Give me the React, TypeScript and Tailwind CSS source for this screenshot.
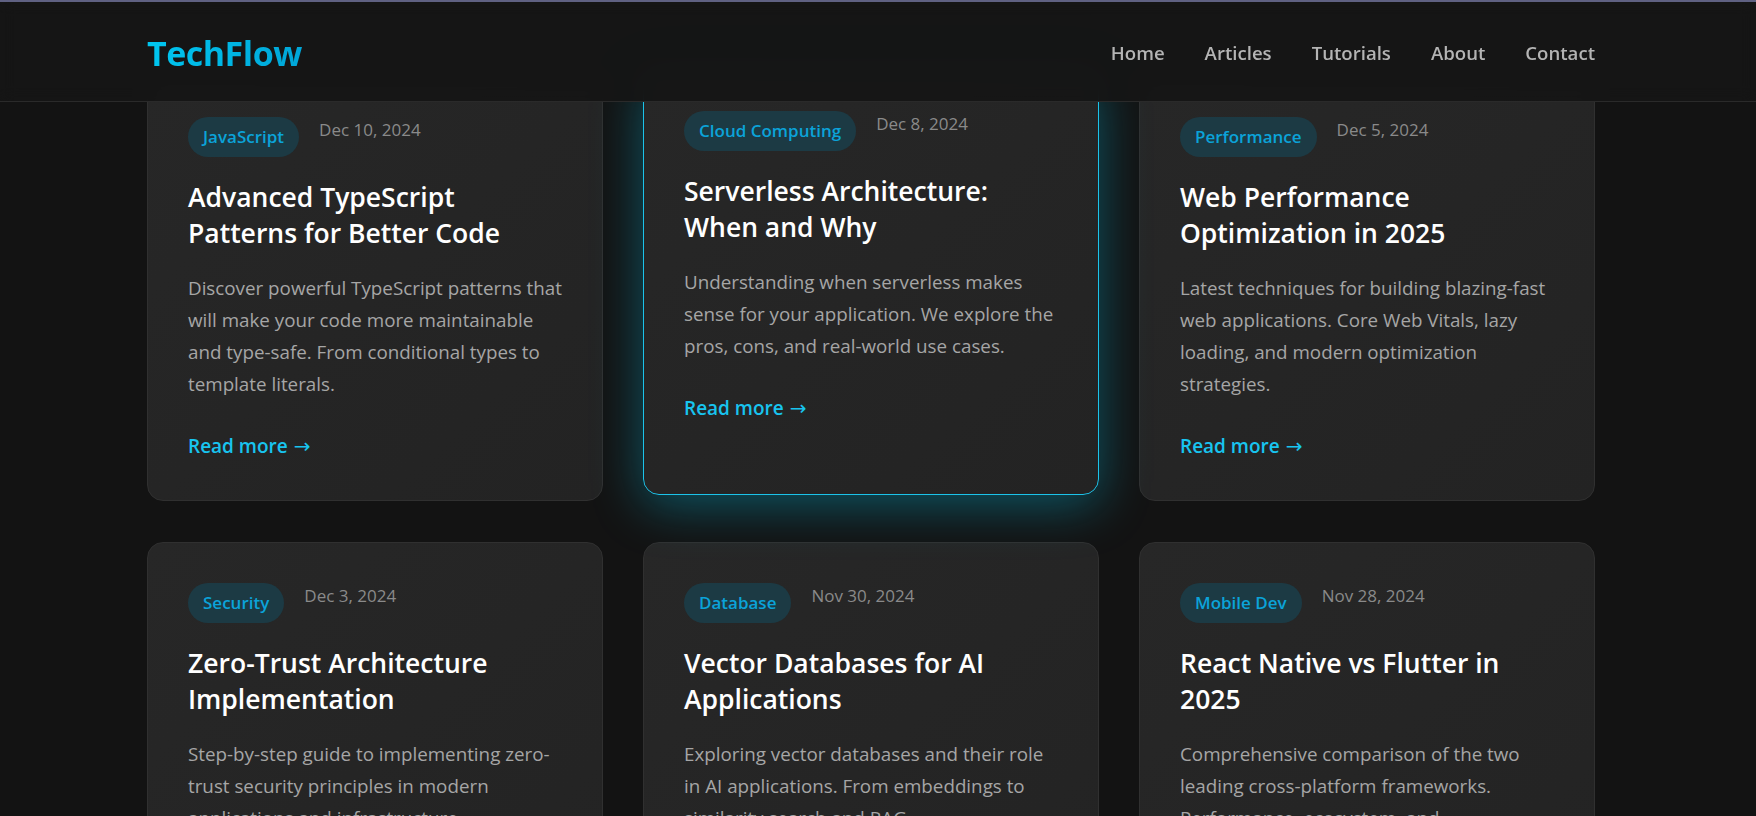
import React from 'react';

interface Post {
  tag: string;
  date: string;
  title: string[];
  excerpt: string[];
  active?: boolean;
}

// lines kept as in the design so the wraps match
const posts: Post[] = [
  {
    tag: 'JavaScript',
    date: 'Dec 10, 2024',
    title: ['Advanced TypeScript', 'Patterns for Better Code'],
    excerpt: [
      'Discover powerful TypeScript patterns that',
      'will make your code more maintainable',
      'and type-safe. From conditional types to',
      'template literals.',
    ],
  },
  {
    tag: 'Cloud Computing',
    date: 'Dec 8, 2024',
    title: ['Serverless Architecture:', 'When and Why'],
    excerpt: [
      'Understanding when serverless makes',
      'sense for your application. We explore the',
      'pros, cons, and real-world use cases.',
    ],
    active: true,
  },
  {
    tag: 'Performance',
    date: 'Dec 5, 2024',
    title: ['Web Performance', 'Optimization in 2025'],
    excerpt: [
      'Latest techniques for building blazing-fast',
      'web applications. Core Web Vitals, lazy',
      'loading, and modern optimization',
      'strategies.',
    ],
  },
  {
    tag: 'Security',
    date: 'Dec 3, 2024',
    title: ['Zero-Trust Architecture', 'Implementation'],
    excerpt: [
      'Step-by-step guide to implementing zero-',
      'trust security principles in modern',
      'applications and infrastructure.',
    ],
  },
  {
    tag: 'Database',
    date: 'Nov 30, 2024',
    title: ['Vector Databases for AI', 'Applications'],
    excerpt: [
      'Exploring vector databases and their role',
      'in AI applications. From embeddings to',
      'similarity search and RAG.',
    ],
  },
  {
    tag: 'Mobile Dev',
    date: 'Nov 28, 2024',
    title: ['React Native vs Flutter in', '2025'],
    excerpt: [
      'Comprehensive comparison of the two',
      'leading cross-platform frameworks.',
      'Performance, ecosystem, and',
      'developer experience.',
    ],
  },
];

const navItems = ['Home', 'Articles', 'Tutorials', 'About', 'Contact'];

const PostCard = ({ post }: { post: Post }) => {
  return (
    <article
      className={
        post.active
          ? 'rounded-2xl border border-[#1cc3ea] bg-gradient-to-br from-[#272727] to-[#232323] px-10 pt-10 pb-[38px] -translate-y-[6px] shadow-[0_10px_50px_rgba(0,212,255,0.35)]'
          : 'rounded-2xl border border-[#303030] bg-gradient-to-br from-[#272727] to-[#232323] px-10 pt-10 pb-[38px]'
      }
    >
      <div className="flex items-start gap-5">
        <span className="rounded-full bg-[#1c3a44] px-[15px] py-2 text-[17px] font-semibold leading-[24px] text-[#0ba3d9]">
          {post.tag}
        </span>
        <span className="text-[17px] leading-[26px] text-[#8a8a8a]">{post.date}</span>
      </div>
      <h2 className="mt-[22px] mb-5 text-[26.5px] font-semibold leading-[36.4px] text-white">
        {post.title.map((line) => (
          <span key={line} className="block whitespace-nowrap">
            {line}
          </span>
        ))}
      </h2>
      <p className="text-[18.8px] leading-[32px] text-[#a6a6a6]">
        {post.excerpt.map((line) => (
          <span key={line} className="block whitespace-nowrap">
            {line}
          </span>
        ))}
      </p>
      <a className="mt-[30px] flex items-center gap-[6px] text-[19px] font-semibold leading-[32px] text-[#18c4ef]">
        <span>Read more</span>
        <span className="font-['DejaVu_Sans',sans-serif] text-[20px] font-normal leading-none">→</span>
      </a>
    </article>
  );
};

export default function App() {
  return (
    <div className="relative h-[816px] overflow-hidden bg-[#131313] font-['Open_Sans',sans-serif]">
      <header className="absolute inset-x-0 top-0 z-10 border-b border-[#2a2a2a] bg-[#151515]/95 backdrop-blur">
        <div className="h-[2px] bg-[#5f6182]" />
        <div className="ml-[147px] flex h-[99px] w-[1448px] items-center justify-between pt-[3px]">
          <span className="bg-gradient-to-r from-[#00c6f0] to-[#00a6d8] bg-clip-text text-[34px] font-bold tracking-[-0.5px] text-transparent">
            TechFlow
          </span>
          <nav className="flex items-center gap-10">
            {navItems.map((item) => (
              <a key={item} className="text-[18.6px] font-semibold text-[#b4b4b4]">
                {item}
              </a>
            ))}
          </nav>
        </div>
      </header>

      <main className="pt-[76px]">
        <div className="ml-[147px] grid w-[1448px] grid-cols-3 gap-x-10 gap-y-[41px]">
          {posts.map((post) => (
            <PostCard key={post.title[0]} post={post} />
          ))}
        </div>
      </main>
    </div>
  );
}
